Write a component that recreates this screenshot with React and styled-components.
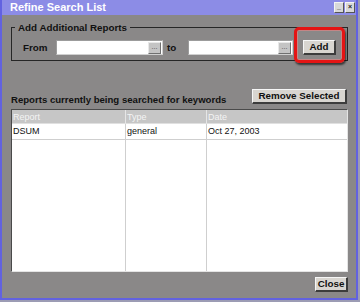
import React from 'react';
import styled, { createGlobalStyle } from 'styled-components';

const Global = createGlobalStyle`
  html, body { margin: 0; padding: 0; }
  body {
    width: 360px; height: 302px; overflow: hidden;
    background: #9c9cb4;
    font-family: "Liberation Sans", Arial, sans-serif;
  }
`;

const Window = styled.div`
  width: 354px;
  height: 298px;
  border: 2px solid #6262e0;
  border-top: none;
  background: #8a8888;
  display: flex;
  flex-direction: column;
`;

const TitleBar = styled.div`
  height: 15px;
  background: #8c8ce6;
  display: flex;
  align-items: center;
  padding: 0 1px 0 8px;
  box-sizing: border-box;
`;

const Title = styled.div`
  flex: 1;
  color: #fff;
  font-weight: bold;
  font-size: 11px;
  line-height: 15px;
`;

const Ctl = styled.div`
  width: 8px;
  height: 9px;
  margin-left: 1px;
  background: #d8d8d8;
  border: 1px solid #f4f4f4;
  border-right-color: #555;
  border-bottom-color: #555;
  font-size: 7px;
  line-height: 8px;
  text-align: center;
  color: #222;
  font-weight: bold;
`;

const Body = styled.div`
  flex: 1;
  display: flex;
  flex-direction: column;
  padding: 6px 8px 5px 9px;
  min-height: 0;
`;

const Group = styled.fieldset`
  margin: 0;
  width: 314px;
  padding: 6px 10px 5px 11px;
  border: 1px solid #262626;
  min-width: 0;
`;

const Legend = styled.legend`
  padding: 0 3px;
  margin-left: -8px;
  font-weight: bold;
  font-size: 9.8px;
  line-height: 13px;
  color: #111;
`;

const Row = styled.div`
  display: flex;
  align-items: center;
  height: 15px;
`;

const Label = styled.span`
  width: ${p => p.$w}px;
  font-weight: bold;
  font-size: 9.8px;
  color: #111;
`;

const Field = styled.div`
  width: ${p => p.$w}px;
  height: 15px;
  box-sizing: border-box;
  background: #fff;
  border: 1px solid #d0d0d0;
  border-top-color: #9c9c9c;
  border-left-color: #9c9c9c;
  display: flex;
  justify-content: flex-end;
  align-items: center;
  padding-right: 1px;
  margin-right: ${p => p.$mr}px;
`;

const Dots = styled.div`
  width: 13px;
  height: 12px;
  box-sizing: border-box;
  background: #c4c4c4;
  border: 1px solid #e8e8e8;
  border-right-color: #707070;
  border-bottom-color: #707070;
  font-size: 7px;
  line-height: 7px;
  text-align: center;
  color: #444;
`;

const Button = styled.div`
  height: 15px;
  box-sizing: border-box;
  width: ${p => p.$w}px;
  background: #d8d5d0;
  border: 1px solid #f6f6f6;
  border-right: 2px solid #3c3c3c;
  border-bottom: 2px solid #3c3c3c;
  font-weight: bold;
  font-size: 9.8px;
  line-height: 12px;
  text-align: center;
  color: #111;
`;

const Highlight = styled.div`
  position: relative;
`;

const RedFrame = styled.div`
  position: absolute;
  left: -9px;
  top: -13px;
  right: -9px;
  bottom: -8px;
  border: 3px solid #e41414;
  border-radius: 5px;
  box-shadow: 1px 2px 2px rgba(0, 0, 0, 0.6), inset 0 0 0 1px rgba(255, 130, 130, 0.5);
  pointer-events: none;
`;

const SectionRow = styled.div`
  margin-top: 28px;
  display: flex;
  justify-content: space-between;
  align-items: flex-end;
  height: 15px;
  width: 336px;
`;

const SectionLabel = styled.span`
  font-weight: bold;
  font-size: 9.6px;
  line-height: 12px;
  margin-bottom: -2px;
  color: #111;
`;

const Table = styled.div`
  margin-top: 5px;
  width: 337px;
  height: 163px;
  box-sizing: border-box;
  border: 1px solid #e4e4e4;
  border-top-color: #4a4a4a;
  border-left-color: #4a4a4a;
  background: #fff;
  display: grid;
  grid-template-columns: 114px 81px 1fr;
  grid-template-rows: 14px 16px 1fr;
`;

const Head = styled.div`
  background: #c6c6c6;
  color: #f4f4f4;
  font-size: 9px;
  line-height: 14px;
  padding-left: 1px;
  border-right: ${p => (p.$last ? 'none' : '1px solid #e6e6e6')};
  border-bottom: 1px solid #e0e0e0;
  box-sizing: border-box;
`;

const Cell = styled.div`
  color: #111;
  font-size: 9px;
  line-height: 15px;
  padding-left: 1px;
  border-right: ${p => (p.$last ? 'none' : '1px solid #cfcfcf')};
  border-bottom: ${p => (p.$fill ? 'none' : '1px solid #cfcfcf')};
  box-sizing: border-box;
`;

const Footer = styled.div`
  margin-top: 5px;
  display: flex;
  justify-content: flex-end;
  width: 337px;
`;

export default function App() {
  return (
    <>
      <Global />
      <Window>
        <TitleBar>
          <Title>Refine Search List</Title>
          <Ctl>_</Ctl>
          <Ctl>×</Ctl>
        </TitleBar>
        <Body>
          <Group>
            <Legend>Add Additional Reports</Legend>
            <Row>
              <Label $w={33}>From</Label>
              <Field $w={107} $mr={4}><Dots>...</Dots></Field>
              <Label $w={21}>to</Label>
              <Field $w={105} $mr={10}><Dots>...</Dots></Field>
              <Highlight>
                <Button $w={33}>Add</Button>
                <RedFrame />
              </Highlight>
            </Row>
          </Group>
          <SectionRow>
            <SectionLabel>Reports currently being searched for keywords</SectionLabel>
            <Button $w={95}>Remove Selected</Button>
          </SectionRow>
          <Table>
            <Head>Report</Head>
            <Head>Type</Head>
            <Head $last>Date</Head>
            <Cell>DSUM</Cell>
            <Cell>general</Cell>
            <Cell $last>Oct 27, 2003</Cell>
            <Cell $fill />
            <Cell $fill />
            <Cell $fill $last />
          </Table>
          <Footer>
            <Button $w={33}>Close</Button>
          </Footer>
        </Body>
      </Window>
    </>
  );
}
